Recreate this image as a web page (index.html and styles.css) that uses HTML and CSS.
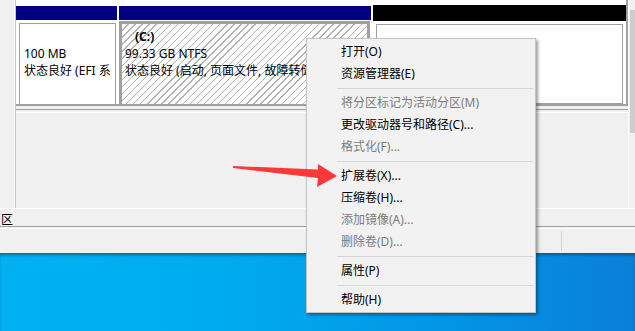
FILE: index.html
```html
<!DOCTYPE html>
<html lang="zh-CN">
<head>
<meta charset="utf-8">
<title>磁盘管理</title>
<link rel="stylesheet" href="styles.css">
</head>
<body>
<div class="screen">
  <div class="window">
    <div class="main">
      <div class="leftcol"></div>
      <div class="content">
        <div class="disk">
          <div class="part p1">
            <div class="hdr blue"></div>
            <div class="body">
              <div class="box">
                <div class="ln">&nbsp;</div>
                <div class="ln">100 MB</div>
                <div class="ln">状态良好 (EFI 系统分区)</div>
              </div>
            </div>
          </div>
          <div class="part p2">
            <div class="hdr blue"></div>
            <div class="body">
              <div class="box sel">
                <div class="ln name">(C:)</div>
                <div class="ln">99.33 GB NTFS</div>
                <div class="ln">状态良好 (启动, 页面文件, 故障转储, 基本数据分区)</div>
              </div>
            </div>
          </div>
          <div class="part p3">
            <div class="hdr black"></div>
            <div class="body">
              <div class="box"></div>
            </div>
          </div>
        </div>
        <div class="row2">
          <div class="row2-inner"></div>
        </div>
      </div>
      <div class="vscroll"><div class="thumb"></div></div>
    </div>
    <div class="legend"><span class="lg">区</span></div>
    <div class="status"><div class="s1"></div><div class="s2"></div></div>
  </div>
  <div class="desktop"></div>

  <div class="menu">
    <div class="item">打开(O)</div>
    <div class="item">资源管理器(E)</div>
    <div class="sep"></div>
    <div class="item dis">将分区标记为活动分区(M)</div>
    <div class="item">更改驱动器号和路径(C)...</div>
    <div class="item dis">格式化(F)...</div>
    <div class="sep"></div>
    <div class="item">扩展卷(X)...</div>
    <div class="item">压缩卷(H)...</div>
    <div class="item dis">添加镜像(A)...</div>
    <div class="item dis">删除卷(D)...</div>
    <div class="sep"></div>
    <div class="item">属性(P)</div>
    <div class="sep"></div>
    <div class="item">帮助(H)</div>
  </div>

  <svg class="arrow" width="635" height="331" viewBox="0 0 635 331">
    <polygon points="233,166 318,169.5 318,164 337,176 317,187 318,178 233,168" fill="#fe3838"/>
  </svg>
</div>
</body>
</html>
```
FILE: styles.css
```css
* { box-sizing: border-box; }
html, body { margin: 0; padding: 0; }
body {
  width: 635px;
  height: 331px;
  overflow: hidden;
  font-family: "Noto Sans", "Noto Sans CJK SC", sans-serif;
  font-size: 12px;
  color: #000;
}
.screen {
  position: relative;
  width: 635px;
  height: 331px;
  overflow: hidden;
  background: #f0f0f0;
}
.window {
  display: flex;
  flex-direction: column;
  height: 253px;
  background: #f0f0f0;
}
.main {
  display: flex;
  height: 209px;
  border-bottom: 1px solid #fff;
}
.leftcol {
  width: 15px;
  background: #f0f0f0;
  border-right: 1px solid #fff;
}
.content {
  width: 613px;
  display: flex;
  flex-direction: column;
  border-left: 1px solid #c4c4c4;
}
.disk {
  height: 106px;
  background: #fff;
  padding-top: 5px;
  display: flex;
  border-right: 2px solid #a0a0a0;
  border-bottom: 2px solid #a0a0a0;
}
.part {
  display: flex;
  flex-direction: column;
  height: 99px;
}
.p1 { width: 101px; margin-right: 2px; }
.p2 { width: 252px; margin-right: 2px; }
.p3 { width: 253px; }
.hdr { height: 15px; flex: none; }
.hdr.blue { background: #000080; margin-top: 1px; height: 14px; }
.hdr.black { background: #000; height: 16px; }
.body { flex: 1; display: flex; }
.p1 .body { padding: 3px 1px 0 3px; }
.p2 .body { padding: 1px 1px 0 0; }
.p3 .body { padding: 3px 3px 0 3px; }
.box {
  flex: 1;
  border: 1px solid #a0a0a0;
  border-bottom: none;
  background: #fff;
  padding: 4px 4px 0 4px;
  overflow: hidden;
}
.p3 .box { border-bottom: 1px solid #a0a0a0; }
.box.sel {
  border: 3px solid #a0a0a0;
  border-bottom: none;
  padding: 4px 4px 0 3px;
  background: repeating-linear-gradient(135deg, #ffffff 0 4px, #b2b2b2 4px 5px);
}
.ln {
  line-height: 17px;
  height: 17px;
  white-space: nowrap;
  overflow: hidden;
  color: #000;
}
.name {
  font-weight: bold;
  padding-left: 10px;
}
.row2 {
  flex: 1;
  padding-top: 3px;
}
.row2-inner {
  height: 100%;
  border-top: 1px solid #a0a0a0;
  box-shadow: inset 0 2px 0 #f0f0f0, inset 0 3px 0 #fff;
}
.vscroll {
  width: 7px;
  border-left: 1px solid #fff;
  padding-left: 1px;
  padding-top: 10px;
}
.thumb {
  width: 5px;
  height: 123px;
  background: #cdcdcd;
}
.legend {
  height: 18px;
  border-bottom: 1px solid #a0a0a0;
  line-height: 18px;
  padding-left: 1px;
  padding-top: 1px;
}
.lg { font-family: "Noto Sans CJK SC", sans-serif; }
.status {
  flex: 1;
  display: flex;
  border-top: 1px solid #f0f0f0;
  box-shadow: inset 0 1px 0 #fff;
  padding: 3px 0 2px 0;
}
.s1 { width: 562px; border-right: 1px solid #d6d6d6; }
.s2 { flex: 1; }
.desktop {
  height: 78px;
  background: linear-gradient(90deg, #00b0f3 0%, #00abef 35%, #0395e6 70%, #0a7fd9 100%);
  box-shadow: inset 0 3px 3px -1px rgba(0, 50, 90, 0.55);
}
.menu {
  position: absolute;
  left: 306px;
  top: 38px;
  width: 230px;
  height: 275px;
  background: #f2f2f2;
  border: 1px solid #c4c4c4;
  padding-top: 2px;
  box-shadow: 2px 2px 3px rgba(0, 0, 0, 0.38);
}
.item {
  height: 22px;
  line-height: 22px;
  padding-left: 34px;
  white-space: nowrap;
  color: #000;
}
.item.dis { color: #7c7c7c; }
.sep {
  height: 7px;
  padding-top: 3px;
  margin-left: 30px;
  margin-right: 2px;
}
.sep::after {
  content: "";
  display: block;
  height: 1px;
  background: #d7d7d7;
}
.arrow {
  position: absolute;
  left: 0;
  top: 0;
  pointer-events: none;
}
```
